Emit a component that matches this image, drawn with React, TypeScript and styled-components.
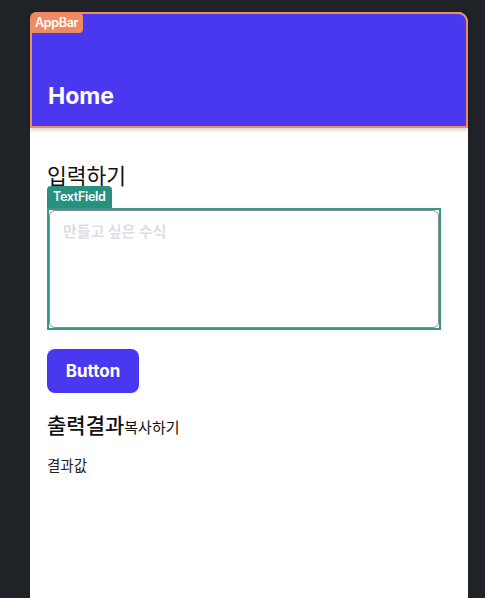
import styled, { createGlobalStyle } from 'styled-components';

const GlobalStyle = createGlobalStyle`
  html, body {
    margin: 0;
    padding: 0;
    background: #1f2327;
    height: 100%;
    overflow: hidden;
  }
  body {
    font-family: Inter, "Noto Sans CJK KR", sans-serif;
  }
`;

const App = () => {
  return (
    <>
      <GlobalStyle />
      <Page>
        <Device>
          <AppBar>
            <Tag color="#ef8a62">AppBar</Tag>
            <AppTitle>Home</AppTitle>
          </AppBar>
          <Content>
            <SectionTitle>입력하기</SectionTitle>
            <FieldWrap>
              <Tag color="#27907f">TextField</Tag>
              <FieldOutline>
                <TextArea placeholder="만들고 싶은 수식" />
              </FieldOutline>
            </FieldWrap>
            <PrimaryButton>Button</PrimaryButton>
            <ResultHeader>
              <ResultTitle>출력결과</ResultTitle>
              <CopyLink>복사하기</CopyLink>
            </ResultHeader>
            <ResultValue>결과값</ResultValue>
          </Content>
        </Device>
      </Page>
    </>
  );
};
export default App;

const Page = styled.div`
  padding: 12px 17px 0 30px;
  height: 598px;
  box-sizing: border-box;
`;

const Device = styled.div`
  width: 438px;
  height: 100%;
  background: #ffffff;
  border-radius: 10px 10px 0 0;
  display: flex;
  flex-direction: column;
`;

const AppBar = styled.div`
  position: relative;
  height: 116px;
  box-sizing: border-box;
  background: #4a38f0;
  border: 2px solid #ef8a62;
  border-radius: 10px 10px 0 0;
  display: flex;
  align-items: flex-end;
  padding: 0 0 17px 16px;
  box-shadow: 0 2px 4px rgba(0, 0, 0, 0.18);
`;

const Tag = styled.div<{ color: string }>`
  position: absolute;
  top: -2px;
  left: -2px;
  background: ${({ color }) => color};
  color: #ffffff;
  font-family: Inter, sans-serif;
  font-size: 12.5px;
  font-weight: 600;
  line-height: 21px;
  padding: 0 5px;
  border-radius: 6px 5px 4px 0;
  letter-spacing: -0.3px;
`;

const AppTitle = styled.div`
  color: #ffffff;
  font-family: Inter, sans-serif;
  font-size: 23px;
  font-weight: 700;
  line-height: 26px;
`;

const Content = styled.div`
  display: flex;
  flex-direction: column;
  align-items: flex-start;
  padding: 34px 27px 0 17px;
`;

const SectionTitle = styled.div`
  font-family: "Noto Sans CJK KR", sans-serif;
  font-size: 21.5px;
  font-weight: 400;
  line-height: 26px;
  color: #111111;
`;

const FieldWrap = styled.div`
  position: relative;
  width: 394px;
  margin-top: 20px;

  & > div:first-child {
    top: -22px;
    left: 0;
    border-radius: 4px 4px 0 0;
    line-height: 22px;
    padding: 0 6px;
  }
`;

const FieldOutline = styled.div`
  border: 2px solid #34998a;
  box-sizing: border-box;
  height: 122px;
`;

const TextArea = styled.textarea`
  display: block;
  width: 100%;
  height: 100%;
  box-sizing: border-box;
  border: 1.5px solid #8a8a8a;
  border-radius: 6px;
  padding: 9px 13px;
  resize: none;
  outline: none;
  font-family: "Noto Sans CJK KR", sans-serif;
  font-size: 15px;
  font-weight: 700;
  &::placeholder {
    color: #dcdee3;
  }
`;

const PrimaryButton = styled.button`
  margin-top: 19px;
  width: 92px;
  height: 44px;
  border: none;
  border-radius: 8px;
  background: #4a38f0;
  color: #ffffff;
  font-family: Inter, sans-serif;
  font-size: 17px;
  font-weight: 700;
`;

const ResultHeader = styled.div`
  display: flex;
  align-items: baseline;
  margin-top: 16px;
`;

const ResultTitle = styled.div`
  font-family: "Noto Sans CJK KR", sans-serif;
  font-size: 21px;
  font-weight: 500;
  line-height: 30px;
  color: #111111;
`;

const CopyLink = styled.div`
  font-family: "Noto Sans CJK KR", sans-serif;
  font-size: 15px;
  color: #111111;
`;

const ResultValue = styled.div`
  margin-top: 15px;
  font-family: "Noto Sans CJK KR", sans-serif;
  font-size: 14.5px;
  color: #222222;
`;
